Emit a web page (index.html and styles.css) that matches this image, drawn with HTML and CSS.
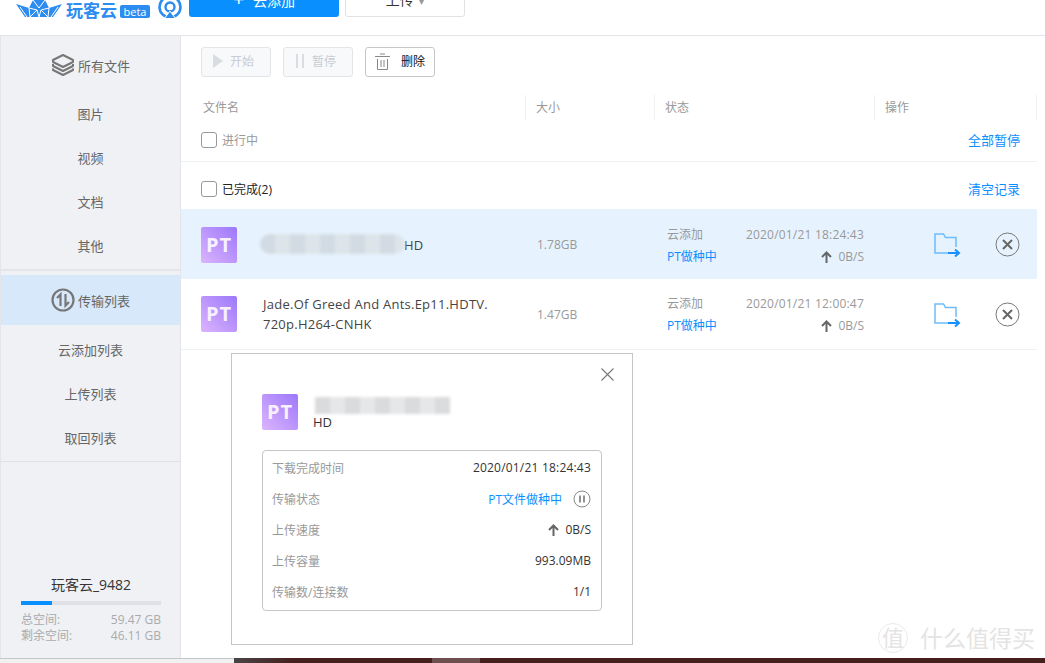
FILE: index.html
```html
<!DOCTYPE html>
<html lang="zh-CN">
<head>
  <meta charset="UTF-8">
  <title>玩客云</title>
  <link rel="stylesheet" href="styles.css">
</head>
<body>
  <div class="app">

    <!-- 顶部 -->
    <header class="topbar">
      <div class="logo">
        <svg class="logo-mark" width="46" height="18" viewBox="0 0 46 18">
          <path d="M0 4 L13 8 L17 0 H29 L33 8 L46 4 L37 17 H9 Z" fill="#2d8cf0"/>
          <path d="M4 7 L11 17 M13 8 L14 17 L21 10 L23 17 L25 10 L32 17 L33 8 M42 7 L35 17 M17 0 L23 8 L29 0 M13 8 L21 10 M33 8 L25 10" fill="none" stroke="#fff"/>
        </svg>
        <span class="logo-text">玩客云</span>
        <span class="beta">beta</span>
        <svg class="logo-cast" width="26" height="19" viewBox="0 0 26 19">
          <circle cx="13" cy="7" r="10.500" fill="none" stroke="#2d8cf0" stroke-width="2.600"/>
          <circle cx="13" cy="7" r="4.500" fill="none" stroke="#2d8cf0" stroke-width="2.400"/>
          <path d="M7.500 18.500 L13 11 L18.500 18.500 Z" fill="#2d8cf0" stroke="#fff" stroke-width="1"/>
        </svg>
      </div>
      <button class="btn-add"><span class="plus">+</span> 云添加</button>
      <button class="btn-upload">上传 <span class="caret">▾</span></button>
    </header>

    <div class="content">

      <!-- 左侧导航 -->
      <aside class="sidebar">
        <div class="nav-group nav-files">
          <a class="nav-head">
            <svg width="24" height="24" viewBox="0 0 24 24" fill="none" stroke="#777" stroke-width="2" stroke-linejoin="round">
              <path d="M12 2 L22 7 V9 L12 14 L2 9 V7 Z"/>
              <path d="M2 11 V13 L12 18 L22 13 V11"/>
              <path d="M2 15.500 V17 L12 22 L22 17 V15.500"/>
            </svg>
            所有文件
          </a>
          <a class="nav-item">图片</a>
          <a class="nav-item">视频</a>
          <a class="nav-item">文档</a>
          <a class="nav-item">其他</a>
        </div>
        <div class="nav-group nav-transfer">
          <a class="nav-head active">
            <svg width="24" height="24" viewBox="0 0 24 24" fill="none" stroke="#777">
              <circle cx="12" cy="12" r="10.500" stroke-width="2.200"/>
              <path d="M9.500 18 V6.500 L6 10 M14.500 6 V17.500 L18 14" stroke-width="2.200"/>
            </svg>
            传输列表
          </a>
          <a class="nav-item">云添加列表</a>
          <a class="nav-item">上传列表</a>
          <a class="nav-item">取回列表</a>
        </div>
        <div class="account">
          <div class="account-name">玩客云_9482</div>
          <div class="quota"><div class="quota-used" style="width:22%"></div></div>
          <div class="quota-line"><span>总空间:</span><span>59.47 GB</span></div>
          <div class="quota-line"><span>剩余空间:</span><span>46.11 GB</span></div>
        </div>
      </aside>

      <!-- 传输列表 -->
      <main class="main">
        <div class="toolbar">
          <button class="tool" disabled>
            <svg width="10" height="14" viewBox="0 0 10 14"><path d="M0 0 L10 7 L0 14 Z" fill="#d9dce0"/></svg>
            开始
          </button>
          <button class="tool" disabled>
            <svg width="10" height="14" viewBox="0 0 10 14"><path d="M1 0 H3 V14 H1 Z M7 0 H9 V14 H7 Z" fill="#d9dce0"/></svg>
            暂停
          </button>
          <button class="tool tool-on">
            <svg width="15" height="17" viewBox="0 0 15 17" fill="none" stroke="#888">
              <path d="M0 3.500 H15 M5 1 H10 M2.500 6 V16.500 H12.500 V6 M6 7 V14 M9 7 V14"/>
            </svg>
            删除
          </button>
        </div>

        <div class="thead">
          <div class="th">文件名</div>
          <div class="th">大小</div>
          <div class="th">状态</div>
          <div class="th">操作</div>
        </div>

        <div class="group group-running">
          <label class="group-title"><span class="check"></span>进行中</label>
          <a class="link">全部暂停</a>
        </div>
        <div class="group group-done">
          <label class="group-title"><span class="check"></span>已完成(2)</label>
          <a class="link">清空记录</a>
        </div>

        <div class="row selected">
          <div class="pt">PT</div>
          <div class="name name-tail">HD<span class="smudge smudge-row"></span></div>
          <div class="size">1.78GB</div>
          <div class="status">
            <div class="status-line"><span>云添加</span><span class="time">2020/01/21 18:24:43</span></div>
            <div class="status-line"><span class="blue">PT做种中</span><span class="speed"><svg class="up" width="11" height="12" viewBox="0 0 11 12"><path d="M5.500 12 V1.500 M1 6 L5.500 1.500 L10 6" fill="none" stroke="#666" stroke-width="2"/></svg>0B/S</span></div>
          </div>
          <svg class="folder" width="27" height="24" viewBox="0 0 27 24">
            <path d="M22 14 V4.500 H11.500 L9.500 1 H1 V20 H14" fill="none" stroke="#6cbcfb" stroke-width="1.500"/>
            <path d="M14 20 H24 M21 16.500 L25 20 L21 23.500" fill="none" stroke="#1890ff" stroke-width="2"/>
          </svg>
          <svg class="remove" width="25" height="25" viewBox="0 0 25 25">
            <circle cx="12.500" cy="12.500" r="11.500" fill="none" stroke="#777"/>
            <path d="M8 8 L17 17 M17 8 L8 17" stroke="#666" stroke-width="2"/>
          </svg>
        </div>

        <div class="row">
          <div class="pt">PT</div>
          <div class="name">Jade.Of Greed And Ants.Ep11.HDTV.<br>720p.H264-CNHK</div>
          <div class="size">1.47GB</div>
          <div class="status">
            <div class="status-line"><span>云添加</span><span class="time">2020/01/21 12:00:47</span></div>
            <div class="status-line"><span class="blue">PT做种中</span><span class="speed"><svg class="up" width="11" height="12" viewBox="0 0 11 12"><path d="M5.500 12 V1.500 M1 6 L5.500 1.500 L10 6" fill="none" stroke="#666" stroke-width="2"/></svg>0B/S</span></div>
          </div>
          <svg class="folder" width="27" height="24" viewBox="0 0 27 24">
            <path d="M22 14 V4.500 H11.500 L9.500 1 H1 V20 H14" fill="none" stroke="#6cbcfb" stroke-width="1.500"/>
            <path d="M14 20 H24 M21 16.500 L25 20 L21 23.500" fill="none" stroke="#1890ff" stroke-width="2"/>
          </svg>
          <svg class="remove" width="25" height="25" viewBox="0 0 25 25">
            <circle cx="12.500" cy="12.500" r="11.500" fill="none" stroke="#777"/>
            <path d="M8 8 L17 17 M17 8 L8 17" stroke="#666" stroke-width="2"/>
          </svg>
        </div>

        <!-- 详情弹窗 -->
        <div class="popup">
          <svg class="popup-close" width="13" height="13" viewBox="0 0 13 13"><path d="M0.500 0.500 L12.500 12.500 M12.500 0.500 L0.500 12.500" stroke="#777" stroke-width="1.100"/></svg>
          <div class="popup-head">
            <div class="pt">PT</div>
            <div class="popup-name">HD<span class="smudge smudge-popup"></span></div>
          </div>
          <div class="detail">
            <div class="detail-row"><span class="label">下载完成时间</span><span class="time">2020/01/21 18:24:43</span></div>
            <div class="detail-row"><span class="label">传输状态</span>
              <span class="detail-state"><span class="blue">PT文件做种中</span>
                <svg width="18" height="18" viewBox="0 0 18 18"><circle cx="9" cy="9" r="8" fill="none" stroke="#888"/><path d="M7 5.500 V12.500 M11 5.500 V12.500" stroke="#777" stroke-width="1.600"/></svg>
              </span>
            </div>
            <div class="detail-row"><span class="label">上传速度</span><span class="speed"><svg class="up" width="11" height="12" viewBox="0 0 11 12"><path d="M5.500 12 V1.500 M1 6 L5.500 1.500 L10 6" fill="none" stroke="#666" stroke-width="2"/></svg>0B/S</span></div>
            <div class="detail-row"><span class="label">上传容量</span><span>993.09MB</span></div>
            <div class="detail-row"><span class="label">传输数/连接数</span><span>1/1</span></div>
          </div>
        </div>

        <!-- 水印 -->
        <div class="watermark"><span class="wm-badge">值</span>什么值得买</div>
      </main>
    </div>

    <!-- 底部露出的窗口 -->
    <div class="bottom">
      <div class="bottom-light"></div>
      <div class="bottom-dark"></div>
      <div class="bottom-mid"></div>
      <div class="bottom-dark bottom-fill"></div>
    </div>
  </div>
</body>
</html>
```

FILE: styles.css
```css
* {
  box-sizing: border-box;
}
body {
  margin: 0;
  background: #fff;
  font-family: "Open Sans", "Noto Sans CJK SC", sans-serif;
  font-size: 12px;
  color: #333;
}
button {
  font-family: inherit;
}
a {
  cursor: pointer;
}
.app {
  width: 1045px;
  height: 663px;
  overflow: hidden;
  display: flex;
  flex-direction: column;
}

/* 顶部 */
.topbar {
  height: 36px;
  flex: none;
  display: flex;
  align-items: flex-start;
  padding-left: 16px;
  border-bottom: 1px solid #e3e5e8;
  overflow: hidden;
}
.logo {
  display: flex;
  align-items: flex-start;
  width: 167px;
  height: 20px;
}
.logo-mark {
  margin-right: 4px;
}
.logo-text {
  font-size: 17px;
  line-height: 20px;
  margin-top: 1px;
  font-weight: 700;
  color: #2d8cf0;
  margin-right: 3px;
}
.beta {
  width: 30px;
  height: 13px;
  margin-top: 5px;
  border-radius: 2px;
  background: #2d8cf0;
  color: #fff;
  font-size: 11px;
  line-height: 13px;
  text-align: center;
}
.logo-cast {
  margin-left: 7px;
}
.btn-add,
.btn-upload {
  height: 36px;
  margin-top: -19px;
  border-radius: 3px;
  font-size: 14px;
}
.btn-add {
  width: 150px;
  margin-left: 6px;
  border: none;
  background: #0a8fff;
  color: #fff;
}
.plus {
  font-size: 20px;
  line-height: 20px;
  margin-right: 5px;
}
.btn-upload {
  width: 120px;
  margin-left: 6px;
  border: 1px solid #e0e2e6;
  background: #fff;
  color: #333;
}
.caret {
  font-size: 10px;
  color: #999;
  margin-left: 2px;
}

.content {
  flex: 1;
  display: flex;
  min-height: 0;
}

/* 左侧导航 */
.sidebar {
  width: 181px;
  flex: none;
  display: flex;
  flex-direction: column;
  background: #eff1f5;
  border-left: 1px solid #e3e5e8;
  border-right: 1px solid #e3e5e8;
  color: #666;
}
.nav-group {
  display: flex;
  flex-direction: column;
}
.nav-files {
  height: 235px;
  padding-top: 4px;
  border-bottom: 2px solid #e3e5e8;
}
.nav-transfer {
  height: 191px;
  padding-top: 4px;
  border-bottom: 1px solid #dfe1e5;
}
.nav-head {
  height: 50px;
  flex: none;
  display: flex;
  align-items: center;
  justify-content: center;
  gap: 3px;
  font-size: 13px;
}
.nav-head.active {
  background: #d6e8f9;
}
.nav-files .nav-head {
  margin-bottom: 1px;
}
.nav-transfer .nav-head {
  margin-bottom: 2px;
}
.nav-item {
  height: 44px;
  flex: none;
  display: flex;
  align-items: center;
  justify-content: center;
  font-size: 13px;
}
.account {
  margin-top: auto;
  padding: 0 19px 14px 20px;
}
.account-name {
  text-align: center;
  font-size: 14px;
  line-height: 20px;
  color: #333;
  margin-bottom: 6px;
}
.quota {
  height: 4px;
  background: #dfe1e6;
  margin-bottom: 7px;
}
.quota-used {
  height: 100%;
  background: #0a8fff;
}
.quota-line {
  display: flex;
  justify-content: space-between;
  line-height: 16px;
  color: #aaa;
}

/* 传输列表 */
.main {
  flex: 1;
  position: relative;
  min-width: 0;
}
.toolbar {
  display: flex;
  gap: 12px;
  padding: 11px 0 0 20px;
}
.tool {
  width: 70px;
  height: 30px;
  display: flex;
  align-items: center;
  gap: 7px;
  padding: 0 0 2px 11px;
  border: 1px solid #e3e5e8;
  border-radius: 3px;
  background: #f8f9fb;
  color: #c8cbd0;
  font-size: 12px;
}
.tool-on {
  background: #fff;
  border-color: #c4c6c9;
  color: #111;
  padding-left: 9px;
  gap: 11px;
}
.thead {
  width: 856px;
  height: 23px;
  margin-top: 18px;
  display: grid;
  grid-template-columns: 345px 129px 220px 162px;
}
.th {
  padding-left: 10px;
  line-height: 25px;
  color: #999;
  border-right: 1px solid #eef0f2;
}
.th:first-child {
  padding-left: 22px;
}
.group {
  width: 856px;
  display: flex;
  align-items: center;
  justify-content: space-between;
  padding: 0 17px 0 20px;
}
.group-running {
  height: 44px;
  border-bottom: 1px solid #eff0f2;
}
.group-done {
  height: 47px;
  padding-top: 6px;
}
.group-title {
  display: flex;
  align-items: center;
  gap: 5px;
  color: #999;
}
.group-done .group-title {
  color: #222;
}
.check {
  width: 16px;
  height: 16px;
  border: 1px solid #999;
  border-radius: 3px;
}
.link {
  font-size: 13px;
  color: #0a8fff;
}
.blue {
  color: #0a8fff;
}
.row {
  width: 856px;
  height: 71px;
  display: grid;
  grid-template-columns: 62px 274px 130px 197px 131px 61px;
  align-items: center;
  padding-left: 20px;
  border-bottom: 1px solid #eff0f2;
}
.row.selected {
  height: 70px;
  padding-top: 1px;
  background: #e6f3fe;
  border-bottom: none;
}
.pt {
  width: 36px;
  height: 36px;
  border-radius: 2px;
  background: linear-gradient(45deg, #dcb4fd, #9c78fa);
  color: #f6f0ff;
  font-size: 20px;
  font-weight: 700;
  letter-spacing: 1px;
  line-height: 36px;
  text-align: center;
}
.name {
  font-size: 13px;
  line-height: 20px;
  letter-spacing: .25px;
  color: #444;
}
.name-tail {
  position: relative;
  padding-left: 141px;
}
.smudge {
  position: absolute;
  filter: blur(1.5px);
  background: repeating-linear-gradient(90deg, #d2dbe3 0 15px, #dde4ea 15px 30px);
}
.smudge-row {
  left: -3px;
  top: -1px;
  width: 145px;
  height: 20px;
  border-radius: 10px;
}
.size {
  color: #999;
}
.status {
  padding-top: 2px;
}
.status-line {
  display: flex;
  justify-content: space-between;
  line-height: 22px;
  color: #999;
}
.time {
  letter-spacing: .2px;
}
.speed {
  display: inline-flex;
  align-items: center;
  gap: 6px;
}
.folder {
  margin: 1px 0 0 70px;
}
.remove {
  display: block;
}

/* 详情弹窗 */
.popup {
  position: absolute;
  left: 50px;
  top: 317px;
  width: 402px;
  height: 292px;
  padding: 40px 30px 0;
  background: #fff;
  border: 1px solid #c4c6c9;
}
.popup-close {
  position: absolute;
  top: 14px;
  right: 18px;
}
.popup-head {
  display: flex;
  gap: 15px;
  height: 56px;
}
.popup-name {
  position: relative;
  width: 200px;
  padding-top: 19px;
  font-size: 13px;
  line-height: 19px;
}
.smudge-popup {
  left: 2px;
  top: 3px;
  width: 135px;
  height: 17px;
  background: repeating-linear-gradient(90deg, #dadbdc 0 15px, #e6e7e8 15px 30px);
}
.detail {
  width: 340px;
  height: 161px;
  padding: 1px 10px 0 9px;
  border: 1px solid #c4c6c9;
  border-radius: 4px;
}
.detail-row {
  height: 31px;
  display: flex;
  align-items: center;
  justify-content: space-between;
  color: #333;
}
.label {
  color: #999;
}
.detail-state {
  display: flex;
  align-items: center;
  gap: 11px;
}

/* 水印 */
.watermark {
  position: absolute;
  right: 10px;
  bottom: 4px;
  display: flex;
  align-items: center;
  font-size: 23px;
  line-height: 32px;
  color: #e4e4e4;
}
.wm-badge {
  width: 30px;
  height: 30px;
  margin-right: 12px;
  border-radius: 50%;
  border: 1px solid #eaeaea;
  font-size: 22px;
  line-height: 27px;
  text-align: center;
}

/* 底部 */
.bottom {
  height: 5px;
  flex: none;
  display: flex;
}
.bottom-light {
  width: 234px;
  background: #f1f1f1;
  border-top: 1px solid #c4c6c9;
}
.bottom-dark {
  width: 198px;
  background: linear-gradient(90deg, #4a4545, #461f1f 30%);
}
.bottom-mid {
  width: 48px;
  background: #6d4f4f;
}
.bottom-fill {
  flex: 1;
  background: #461f1f;
}
```
